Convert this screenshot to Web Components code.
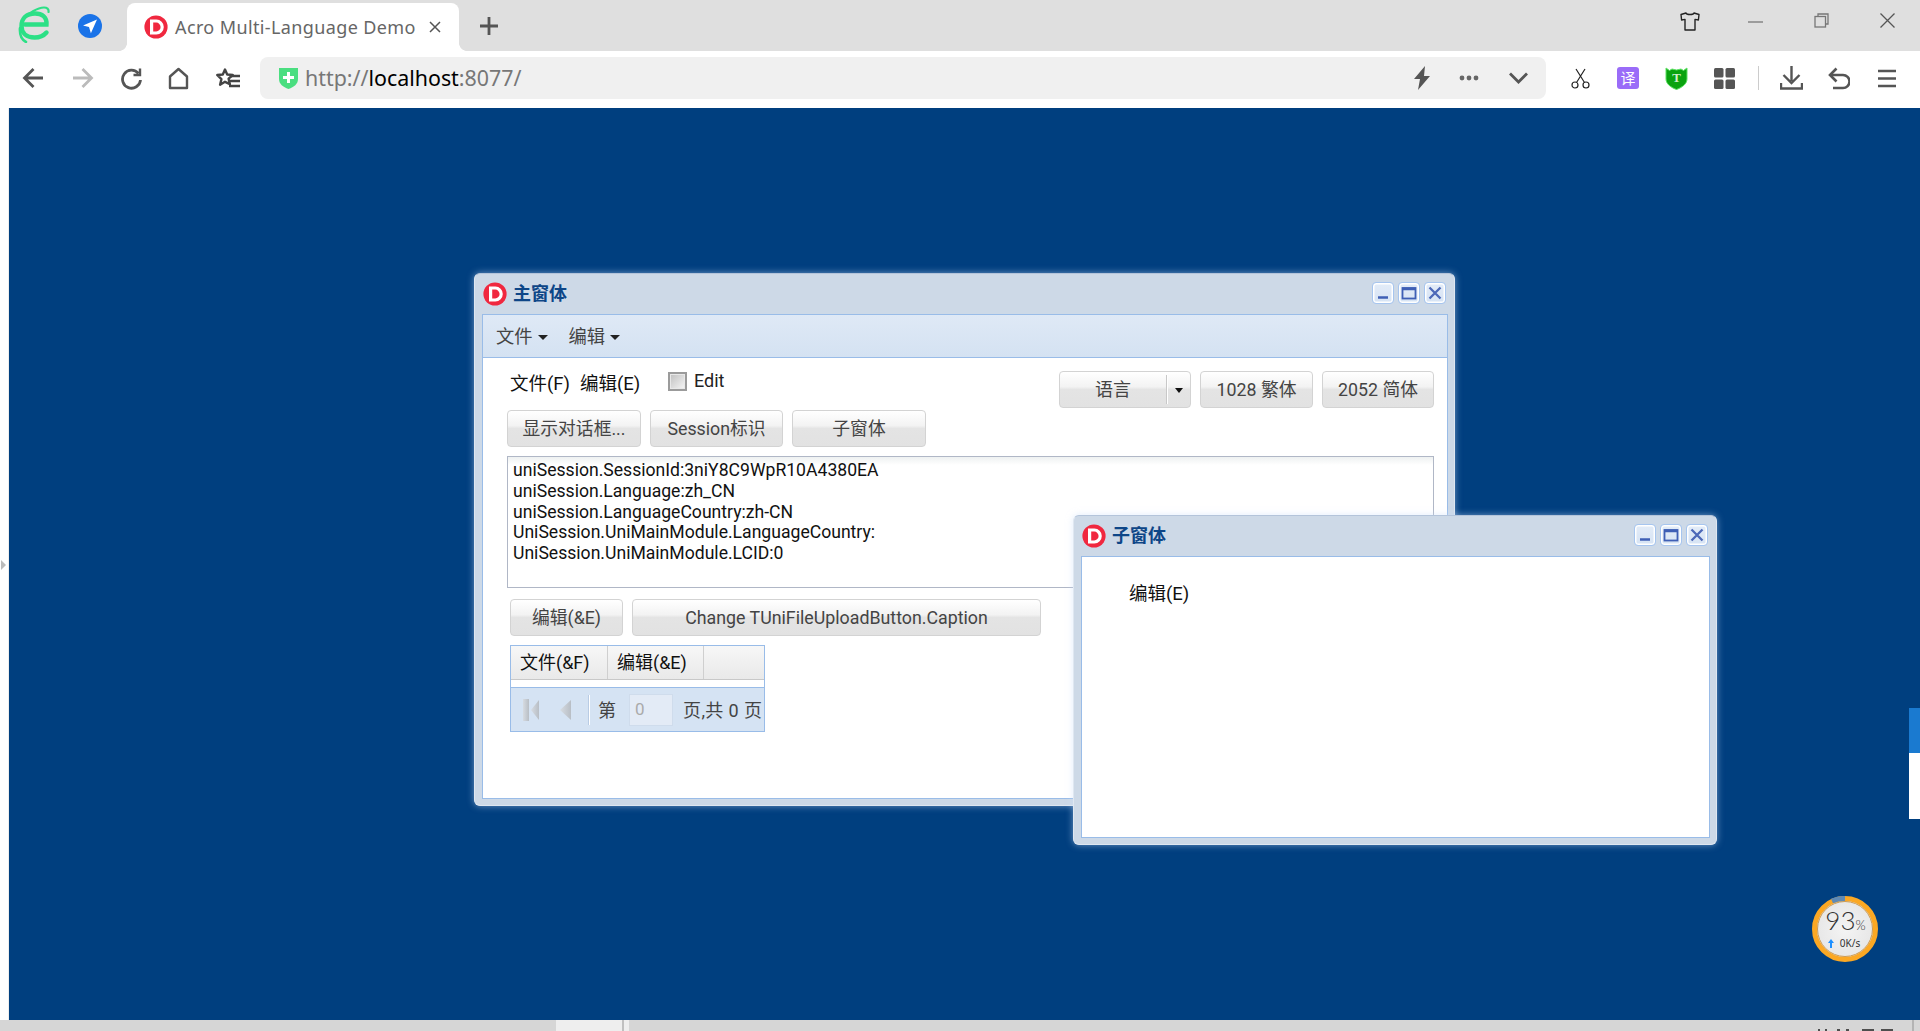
<!DOCTYPE html>
<html lang="zh">
<head>
<meta charset="utf-8">
<title>Acro Multi-Language Demo</title>
<style>
html,body{margin:0;padding:0;height:1031px;overflow:hidden;background:#fff}
body{display:flex;flex-direction:column;font-family:Roboto,"Noto Sans CJK SC",sans-serif;font-size:18px}
</style>
</head>
<body>
<browser-tabbar></browser-tabbar>
<browser-toolbar></browser-toolbar>
<app-desktop>
  <ui-window style="left:465px;top:165px;width:981px;height:533px">
    <span slot="title">主窗体</span>
    <ui-menubar>
      <ui-menu-item>文件</ui-menu-item>
      <ui-menu-item>编辑</ui-menu-item>
    </ui-menubar>
    <main-form></main-form>
  </ui-window>
  <ui-window style="left:1064px;top:407px;width:644px;height:330px">
    <span slot="title">子窗体</span>
    <child-form></child-form>
  </ui-window>
  <net-meter></net-meter>
  <side-tab></side-tab>
</app-desktop>
<status-bar></status-bar>
<script>
const def=(name,html)=>customElements.define(name,class extends HTMLElement{
  constructor(){super();this.attachShadow({mode:'open'}).innerHTML=html;}
});
const CJK='"Noto Sans","Noto Sans CJK SC",sans-serif';
const UI='Roboto,"Noto Sans CJK SC",sans-serif';

def('app-logo',`<style>:host{display:block;width:24px;height:24px;flex:none}svg{display:block;width:100%;height:100%}</style>
<svg viewBox="0 0 24 24"><circle cx="12" cy="12" r="11.6" fill="#f0283f"/><path fill="#fff" fill-rule="evenodd" d="M6 4.600h6.400a7.400 7.400 0 0 1 0 14.800H6zM9.200 7.600v8.800h3a4.400 4.400 0 0 0 0-8.800z"/></svg>`);

def('browser-tabbar',`<style>
:host{display:flex;align-items:flex-start;height:51px;flex:none;background:#dfdfdf;position:relative}
svg{display:block;flex:none}
.tab{position:relative;margin:3px 0 0 25px;width:332px;height:48px;background:#fff;border-radius:8px 8px 0 0;display:flex;align-items:center;box-sizing:border-box;padding:0 17px;color:#666;font:18px/24px ${CJK}}
.tab::before,.tab::after{content:"";position:absolute;bottom:0;width:8px;height:8px}
.tab::before{left:-8px;background:radial-gradient(circle at 0 0,#dfdfdf 7.6px,#fff 8.2px)}
.tab::after{right:-8px;background:radial-gradient(circle at 100% 0,#dfdfdf 7.6px,#fff 8.2px)}
.tab span{margin:-1px 0 0 7px;white-space:nowrap;flex:none;width:240px;letter-spacing:.38px}
.tab svg{margin:0 0 0 14px}
</style>
<svg style="margin:6px 0 0 17px" width="33" height="37" viewBox="0 0 33 37" fill="none" stroke="#2ce086" stroke-linecap="round">
<path stroke-width="4.400" d="M8 18.500H29.500C30 11 25 7.500 18 7.500 9.500 7.500 4.500 12.500 4.500 20S10 31.500 17.500 31.500C22.500 31.500 26.500 30 29.500 26.500"/>
<path stroke-width="2.200" d="M5 15C11 7 21 1.500 27 1.500 30 1.500 32 3 31.500 6"/>
<path stroke-width="2.600" d="M3 22C2.500 29 4 33.500 9 36"/>
</svg>
<svg style="margin:14px 0 0 28px" width="24" height="24" viewBox="0 0 24 24"><circle cx="12" cy="12" r="12" fill="#1a73e8"/><path fill="#fff" d="M19 5.500 5 11.500l6 1.600 1.900 6.200z"/></svg>
<div class="tab"><app-logo></app-logo><span>Acro Multi-Language Demo</span>
<svg width="12" height="12" viewBox="0 0 12 12" stroke="#555" stroke-width="1.500"><path d="M1 1l10 10M11 1 1 11"/></svg></div>
<svg style="margin:17px 0 0 21px" width="18" height="18" viewBox="0 0 18 18" stroke="#555" stroke-width="2.800"><path d="M9 0v18M0 9h18"/></svg>
<svg style="margin:12px 0 0 1182px" width="20" height="19" viewBox="0 0 20 19" fill="none" stroke="#222" stroke-width="1.400" stroke-linejoin="round"><path d="M6 1 1 2.500l.6 5.500 3.400-.6V18h10V7.400l3.400.6.6-5.500L14 1C13.500 3 6.500 3 6 1z"/></svg>
<svg style="margin:21px 0 0 48px" width="15" height="2" viewBox="0 0 15 2"><path d="M0 1h15" stroke="#777" stroke-width="1.300"/></svg>
<svg style="margin:13px 0 0 51px" width="15" height="15" viewBox="0 0 15 15" fill="none" stroke="#777" stroke-width="1.300"><path d="M4 3.500V1h10v10h-2.500"/><rect x="1" y="3.500" width="10.500" height="10.500"/></svg>
<svg style="margin:13px 0 0 51px" width="15" height="15" viewBox="0 0 15 15" stroke="#555" stroke-width="1.300"><path d="M.5.5l14 14M14.500.5l-14 14"/></svg>`);

def('browser-toolbar',`<style>
:host{display:flex;align-items:center;height:57px;flex:none;background:#fff;padding:0 0 3px 22px;box-sizing:border-box}
svg{display:block;flex:none}
.url{width:1286px;height:42px;margin-left:20px;background:#f0f0f0;border-radius:8px;display:flex;align-items:center;flex:none;box-sizing:border-box;padding-left:18px;font:21.4px/30px ${CJK};color:#777;white-space:nowrap}
.url b{font-weight:400;color:#000}
.url span{margin:-1px 0 0 6px}
.url .end{margin-left:auto;display:flex;align-items:center}
.y{width:22px;height:22px;flex:none;border-radius:3px;background:#9a6cf8;color:#fff;margin-left:27px;font:15px/22px "Noto Sans CJK SC",sans-serif;text-align:center}
.sep{width:1px;height:24px;background:#ccc;margin-left:23px;flex:none}
</style>
<svg width="22" height="24" viewBox="0 0 22 24" fill="none" stroke="#555" stroke-width="2.800"><path d="M21 12H3M11.500 3 2.500 12l9 9"/></svg>
<svg style="margin-left:28px" width="22" height="24" viewBox="0 0 22 24" fill="none" stroke="#bbb" stroke-width="2.800"><path d="M1 12h18M10.500 3l9 9-9 9"/></svg>
<svg style="margin-left:26px" width="22" height="24" viewBox="0 0 22 24" fill="none" stroke="#555" stroke-width="2.800"><path d="M18.500 7.500A9 9 0 1 0 20.500 14"/><path d="M20 2.500V9h-6.500" stroke-width="2.400"/></svg>
<svg style="margin-left:26px" width="21" height="24" viewBox="0 0 21 24" fill="none" stroke="#555" stroke-width="2.400" stroke-linejoin="round"><path d="M2 10.500 10.500 3 19 10.500V22H2z"/></svg>
<svg style="margin-left:26px" width="25" height="24" viewBox="0 0 25 24"><path fill="none" stroke="#444" stroke-width="2.400" stroke-linejoin="round" d="M10 3.500l2.200 5 5.600.5-4.200 3.700 1.300 5.500L10 15.800l-4.900 2.900 1.300-5.500L2.200 9l5.600-.5z"/><path stroke="#444" stroke-width="2.400" d="M15 10h10M15 15h10M14 20h11"/></svg>
<div class="url">
<svg width="21" height="22" viewBox="0 0 21 22"><path fill="#4ade80" d="M1 1h19v11c0 5-4 8-9.500 10C5 20 1 17 1 12z"/><path stroke="#fff" stroke-width="3" d="M10.500 5v11M5 10.500h11"/></svg>
<span>http://<b>localhost</b>:8077/</span>
<div class="end">
<svg width="18" height="24" viewBox="0 0 18 24"><path fill="#555" d="M12 0 1 13h6l-2 11 12-14h-6z"/></svg>
<svg style="margin-left:28px" width="20" height="6" viewBox="0 0 20 6" fill="#666"><circle cx="3" cy="3" r="2.400"/><circle cx="10" cy="3" r="2.400"/><circle cx="17" cy="3" r="2.400"/></svg>
<svg style="margin:0 18px 0 30px" width="19" height="12" viewBox="0 0 19 12" fill="none" stroke="#555" stroke-width="2.800"><path d="M1 1.500 9.500 10 18 1.500"/></svg>
</div></div>
<svg style="margin-left:25px" width="19" height="21" viewBox="0 0 19 21" fill="none" stroke="#222" stroke-width="1.200"><circle cx="4" cy="17" r="3"/><circle cx="15" cy="17" r="3"/><path d="M5.500 14.500 14 1M13.500 14.500 5 1"/></svg>
<div class="y" style="margin-left:27px">译</div>
<svg style="margin-left:26px" width="23" height="23" viewBox="0 0 23 23"><path fill="#0aa30f" stroke="#5fe265" d="M1 1l3.500 2.500L7 2l4.500 1L16 2l2.500 1.500L22 1v11c0 5-5 8.500-10.500 10.500C6 20.500 1 17 1 12z"/><text x="11.500" y="15" text-anchor="middle" font-family="Liberation Serif" font-weight="700" font-size="13" fill="#cfeecb">T</text></svg>
<svg style="margin-left:26px" width="21" height="21" viewBox="0 0 21 21" fill="#555"><rect width="9.500" height="9.500" rx="1.500"/><rect x="11.500" width="9.500" height="9.500" rx="1.500"/><rect y="11.500" width="9.500" height="9.500" rx="1.500"/><rect x="11.500" y="11.500" width="9.500" height="9.500" rx="1.500"/></svg>
<div class="sep"></div>
<svg style="margin-left:21px" width="23" height="24" viewBox="0 0 23 24" fill="none" stroke="#555" stroke-width="2.400"><path d="M11.500 0v15M3.500 9l8 8 8-8M1 17v5.500h21V17"/></svg>
<svg style="margin-left:25px" width="22" height="23" viewBox="0 0 22 23" fill="none" stroke="#555" stroke-width="2.600"><path d="M2 8h13a6 6 0 0 1 0 13H5"/><path d="M8.500 1.500 2 8l6.500 6.500"/></svg>
<svg style="margin-left:28px" width="18" height="19" viewBox="0 0 18 19" stroke="#555" stroke-width="2.600"><path d="M0 2h18M0 9.500h18M0 17h18"/></svg>`);

def('app-desktop',`<style>
:host{display:flex;flex:1;min-height:0}
.strip{width:8px;flex:none;background:#fff;border-right:1px solid #eee;display:flex;align-items:center}
.arrow{width:0;height:0;margin:2px 0 0 1px;border-left:5px solid #bbb;border-top:5px solid transparent;border-bottom:5px solid transparent}
.canvas{flex:1;position:relative;background:#003f7f;overflow:hidden}
</style>
<div class="strip"><div class="arrow"></div></div>
<div class="canvas"><slot></slot></div>`);

def('ui-window',`<style>
:host{position:absolute;box-sizing:border-box;display:flex;flex-direction:column;background:#cdd9e7;border:1px solid #dfe7f1;border-top-color:#b4c4da;border-radius:6px;padding:0 6px 6px 7px;box-shadow:0 0 7px rgba(200,220,250,.55);font:18px/24px ${UI};color:#000}
.head{height:40px;box-sizing:border-box;padding:0 0 1px 1px;flex:none;display:flex;align-items:center}
.t{margin:0 0 0 6px;font-weight:700;font-size:18px;color:#0e4687;flex:1}
.tools{display:flex;gap:4px;margin:-1px 2px 0 0}
.tool{width:22px;height:22px;box-sizing:border-box;border:1px solid #a6c5ef;border-radius:4px;background:linear-gradient(#e3ecf8,#d6e3f4);box-shadow:inset 0 0 0 1.5px #fff;display:block}
.body{flex:1;min-height:0;background:#fff;border:1px solid #99bce8;display:flex;flex-direction:column}
</style>
<div class="head"><app-logo></app-logo><div class="t"><slot name="title"></slot></div>
<div class="tools">
<svg class="tool" viewBox="0 0 20 20" stroke="#3f5fb5" stroke-width="2.600"><path d="M5 14.500h10"/></svg>
<svg class="tool" viewBox="0 0 20 20" fill="none" stroke="#3f5fb5" stroke-width="1.800"><rect x="3.500" y="5" width="13" height="10.500"/><path d="M3.500 6h13" stroke-width="2.400"/></svg>
<svg class="tool" viewBox="0 0 20 20" stroke="#4c68b8" stroke-width="2.300"><path d="M4.500 4.500l11 11M15.500 4.500l-11 11"/></svg>
</div></div>
<div class="body"><slot></slot></div>`);

def('ui-menubar',`<style>:host{display:flex;height:43px;flex:none;box-sizing:border-box;padding:0 0 1px 13px;gap:21px;align-items:center;background:linear-gradient(#dfe9f6,#d4e2f2);border-bottom:1px solid #99bce8}</style><slot></slot>`);
def('ui-menu-item',`<style>:host{display:flex;align-items:center;color:#444;font-size:18.3px;margin-top:2px}
i{width:0;height:0;margin:2px 0 0 5px;border-top:5px solid #222;border-left:5px solid transparent;border-right:5px solid transparent}</style><slot></slot><i></i>`);

const BTN='background:linear-gradient(#fff,#f3f3f3 42%,#e4e4e4 50%,#e2e2e2);border:1px solid #d3d3d3;border-radius:4px;';
def('ui-button',`<style>:host{display:flex;box-sizing:border-box;height:37px;align-items:center;justify-content:center;${BTN}color:#444;font-size:17.8px;white-space:nowrap;flex:none}</style><slot></slot>`);
def('ui-split-button',`<style>:host{display:flex;box-sizing:border-box;height:37px;width:132px;${BTN}color:#444;flex:none;font-size:18px}
.m{flex:1;display:flex;align-items:center;justify-content:center}
.a{width:23px;flex:none;margin:3px 0;border-left:1px solid #c8c8c8;box-shadow:inset 1px 0 0 #fff;display:flex;align-items:center;justify-content:center}
i{width:0;height:0;border-top:5px solid #111;border-left:4px solid transparent;border-right:4px solid transparent;margin-top:1px}</style>
<div class="m"><slot></slot></div><div class="a"><i></i></div>`);
def('ui-checkbox',`<style>:host{display:flex;align-items:flex-start;flex:none;color:#222;font-size:18px;line-height:20px}
.b{width:19px;height:19px;box-sizing:border-box;border:2px solid #9b9b9b;background:linear-gradient(135deg,#bfbfbf,#f6f6f6);box-shadow:inset 0 0 0 1px #e8e8e8;margin:1px 7px 0 0}</style>
<div class="b"></div><slot></slot>`);
def('ui-memo',`<style>:host{display:block;box-sizing:border-box;height:132px;margin-top:9px;border:1px solid #b0b7c6;background:linear-gradient(#eef1f1,#fff 8px);padding:3px 5px;font-size:17.6px;line-height:20.800px;color:#111;white-space:pre}</style><slot></slot>`);

def('ui-pager',`<style>:host{display:flex;align-items:center;height:43px;flex:none;background:#d5e3f3;color:#444;font-size:18px;white-space:nowrap;box-sizing:border-box}
svg{display:block;flex:none}
span{position:relative;top:1px}
.sep{width:1px;height:30px;background:#b9cce4;box-shadow:1px 0 0 #fff;margin-left:17px}
.in{width:44px;height:32px;box-sizing:border-box;border:1px solid #cfdcec;background:#e3ebf6;color:#aaa;font-size:17px;line-height:28px;padding-left:5px;margin-left:13px}
</style>
<svg style="margin-left:12px" width="16" height="22" viewBox="0 0 16 22"><defs><linearGradient id="p"><stop offset="0" stop-color="#d6dbe1"/><stop offset="1" stop-color="#b8bec5"/></linearGradient></defs><path fill="url(#p)" d="M0 0h6v22H0z"/><path fill="url(#p)" d="M16 1v20L8 11z"/></svg>
<svg style="margin-left:21px" width="11" height="22" viewBox="0 0 11 22"><path fill="url(#p)" d="M11 1v20L0 11z"/></svg>
<div class="sep"></div><span style="margin-left:9px">第</span><div class="in">0</div><span style="margin-left:10px;letter-spacing:.4px">页,共 0 页</span>`);

def('ui-grid',`<style>:host{display:block;box-sizing:border-box;width:255px;height:87px;margin:9px 0 0 3px;border:1px solid #99bce8;background:#fff;overflow:hidden;font-size:18px;color:#111}
.h{display:flex;height:34px;box-sizing:border-box;background:linear-gradient(#f7f7f7,#e9e9e9);border-bottom:1px solid #c8c8c8}
.c{box-sizing:border-box;border-right:1px solid #cfcfcf;display:flex;align-items:center;padding-left:9px;white-space:nowrap}
.gap{height:8px;border-bottom:1px solid #99bce8;box-sizing:border-box}
</style>
<div class="h"><div class="c" style="width:97px">文件(&amp;F)</div><div class="c" style="width:96px">编辑(&amp;E)</div></div>
<div class="gap"></div><ui-pager></ui-pager>`);

def('main-form',`<style>
:host{display:flex;flex-direction:column;flex:1;box-sizing:border-box;padding:13px 13px 0 24px;font-size:18px}
.r1{display:flex;height:37px;flex:none}
.lb{margin:1px 0 0 0;color:#111;white-space:nowrap;font-size:18.5px}
.right{margin-left:auto;display:flex;gap:9px}
.r2{display:flex;gap:9px;margin-top:2px}
.r3{display:flex;gap:9px;margin:11px 0 0 3px}
</style>
<div class="r1">
<span class="lb" style="width:70px;margin-left:3px">文件(F)</span><span class="lb" style="width:88px">编辑(E)</span>
<ui-checkbox>Edit</ui-checkbox>
<div class="right"><ui-split-button>语言</ui-split-button><ui-button style="width:113px">1028 繁体</ui-button><ui-button style="width:112px">2052 简体</ui-button></div>
</div>
<div class="r2"><ui-button style="width:134px">显示对话框...</ui-button><ui-button style="width:133px">Session标识</ui-button><ui-button style="width:134px">子窗体</ui-button></div>
<ui-memo>uniSession.SessionId:3niY8C9WpR10A4380EA
uniSession.Language:zh_CN
uniSession.LanguageCountry:zh-CN
UniSession.UniMainModule.LanguageCountry:
UniSession.UniMainModule.LCID:0</ui-memo>
<div class="r3"><ui-button style="width:113px">编辑(&amp;E)</ui-button><ui-button style="width:409px">Change TUniFileUploadButton.Caption</ui-button></div>
<ui-grid></ui-grid>`);

def('child-form',`<style>:host{display:block;padding:25px 0 0 47px;color:#111;font-size:18.5px}</style>编辑(E)`);

def('net-meter',`<style>:host{position:absolute;left:1803px;top:788px;width:66px;height:66px;display:flex;flex-direction:column;align-items:center;color:#444}
svg{position:absolute;inset:0}
.p{position:relative;margin:10px 0 0 1px;font:300 26px/28px Lato,"Noto Sans",sans-serif;color:#333;white-space:nowrap}
.p small{font-size:13px}
.s{position:relative;font:10px/12px "Noto Sans",sans-serif;white-space:nowrap;display:flex;align-items:center;gap:6px;margin:-2px 0 0 -2px;color:#333}
.s svg{position:static;display:block}
</style>
<svg viewBox="0 0 66 66"><defs><radialGradient id="g"><stop offset="0" stop-color="#f4f4f4"/><stop offset="1" stop-color="#e6e6e6"/></radialGradient></defs>
<circle cx="33" cy="33" r="30.500" fill="url(#g)" stroke="#fba824" stroke-width="5"/>
<circle cx="33" cy="33" r="27.500" fill="none" stroke="#cf9a4c" stroke-width="1"/>
<path d="M20 5A30.500 30.500 0 0 1 33 2.500" fill="none" stroke="#5f8ab5" stroke-width="5"/></svg>
<div class="p">93<small>%</small></div>
<div class="s"><svg width="6" height="9" viewBox="0 0 6 9" fill="#1e90ff"><path d="M3 0 6 4H4v5H2V4H0z"/></svg><span>0K/s</span></div>`);

def('side-tab',`<style>:host{position:absolute;right:0;top:600px;width:11px;height:111px;display:flex;flex-direction:column}
.a{height:45px;background:#1a7ad0}.b{flex:1;background:#fff}</style><div class="a"></div><div class="b"></div>`);

def('status-bar',`<style>:host{display:flex;height:11px;flex:none;background:#d6d6d6;overflow:hidden}
.l{margin-left:556px;width:66px;background:#eee}.d{width:2px;background:#c0c0c0}.l2{width:5px;background:#eee}
.sp{flex:1;display:flex;justify-content:flex-end;align-items:flex-end}
.e{width:2px;background:#b4b4b4;margin-left:15px}.r{width:6px}
svg{display:block}</style>
<div class="l"></div><div class="d"></div><div class="l2"></div>
<div class="sp"><svg width="82" height="2" viewBox="0 0 82 2" stroke="#222" stroke-width="1.500"><path d="M3 1h2M10 1h2M22 1h3M31 1h3M47 1h12M66 1h12"/></svg></div>
<div class="e"></div><div class="r"></div>`);
</script>
</body>
</html>
